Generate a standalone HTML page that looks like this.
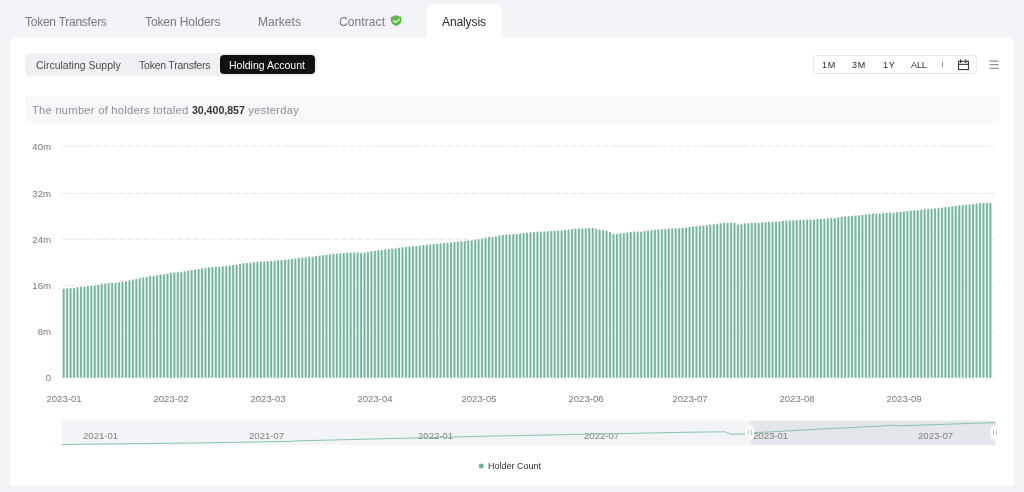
<!DOCTYPE html>
<html>
<head>
<meta charset="utf-8">
<style>
html,body{margin:0;padding:0;}
body{width:1024px;height:492px;overflow:hidden;background:#f2f4f8;-webkit-font-smoothing:antialiased;position:relative;font-family:"Liberation Sans",sans-serif;}
.a{position:absolute;white-space:nowrap;will-change:transform;}
.tab{font-size:12px;color:#74787f;line-height:12px;top:16px;letter-spacing:-0.1px;}
.card{position:absolute;left:9.5px;top:37px;width:1004.5px;height:448.8px;background:#fff;border-radius:8px 8px 4px 4px;}
.atab{position:absolute;left:427px;top:4px;width:75px;height:40px;background:#fff;border-radius:8px 8px 0 0;}
.seg{position:absolute;left:25px;top:52.7px;width:292px;height:23.5px;background:#eff0f3;border-radius:5px;}
.segon{position:absolute;left:220px;top:55px;width:95px;height:19px;background:#111;border-radius:4px;}
.st{font-size:10.5px;line-height:11px;top:60.2px;color:#4a4a4a;}
.tr{position:absolute;left:813px;top:55px;width:162px;height:17px;border:1px solid #e6e8eb;border-radius:3px;}
.tt{font-size:9px;line-height:10px;top:59.7px;color:#2a2a2a;letter-spacing:0.75px;}
.info{position:absolute;left:25px;top:96px;width:974.5px;height:26.7px;background:#f8f8fa;border-radius:3px;}
.it{font-size:11.2px;line-height:12px;top:104px;color:#8a8e96;letter-spacing:0.25px;}
.yl{font-size:9.6px;color:#76797f;line-height:10px;text-align:right;width:30px;left:21px;}
.xl{font-size:9.6px;color:#76797f;line-height:10px;top:393.5px;width:60px;text-align:center;}
.sl{font-size:9.6px;color:#808080;line-height:10px;top:431px;}
</style>
</head>
<body>
<div class="a" style="left:1018px;top:0;width:6px;height:492px;background:#f2f4f8;"></div>
<div class="card"></div>
<div class="atab"></div>

<div class="a tab" style="left:25px;letter-spacing:-0.25px;">Token Transfers</div>
<div class="a tab" style="left:145px;">Token Holders</div>
<div class="a tab" style="left:258.3px;letter-spacing:0.05px;">Markets</div>
<div class="a tab" style="left:339.3px;letter-spacing:0.1px;">Contract</div>
<svg class="a" style="left:390px;top:15px;" width="12" height="12" viewBox="0 0 12 12">
<path d="M6.2 0.1 C7.9 1.1 9.5 1.7 11.4 1.9 L11.4 5.6 C11.4 8.2 9.3 10.1 6.2 10.9 C3.1 10.1 0.9 8.2 0.9 5.6 L0.9 1.9 C2.9 1.7 4.5 1.1 6.2 0.1 Z" fill="#5cb744"/>
<path d="M3.4 5.7 L5.6 7.5 L9.4 4.2" fill="none" stroke="#e8fbe0" stroke-width="1.2" stroke-linecap="round" stroke-linejoin="round"/>
</svg>
<div class="a tab" style="left:442px;color:#2b2b2b;">Analysis</div>

<div class="seg"></div>
<div class="segon"></div>
<div class="a st" style="left:36px;">Circulating Supply</div>
<div class="a st" style="left:139px;letter-spacing:-0.23px;">Token Transfers</div>
<div class="a st" style="left:229px;color:#fff;">Holding Account</div>

<div class="tr"></div>
<div class="a tt" style="left:822px;">1M</div>
<div class="a tt" style="left:852px;">3M</div>
<div class="a tt" style="left:883px;">1Y</div>
<div class="a tt" style="left:911.3px;letter-spacing:-0.1px;">ALL</div>
<div class="a" style="left:941.8px;top:62.2px;width:1px;height:4.5px;background:#8f8f8f;"></div>
<svg class="a" style="left:950px;top:54px;" width="54" height="22" viewBox="950 54 54 22">
<rect x="958.6" y="61.3" width="9.8" height="8.3" fill="none" stroke="#2a2a2a" stroke-width="1"/>
<line x1="958.6" y1="64.3" x2="968.4" y2="64.3" stroke="#2a2a2a" stroke-width="1"/>
<line x1="960.6" y1="59.3" x2="960.6" y2="63" stroke="#2a2a2a" stroke-width="1"/>
<line x1="965.9" y1="59.3" x2="965.9" y2="63" stroke="#2a2a2a" stroke-width="1"/>
<g stroke="#7a7a7a" stroke-width="1">
<line x1="989.5" y1="61.1" x2="998.7" y2="61.1"/>
<line x1="989.5" y1="64.7" x2="998.7" y2="64.7"/>
<line x1="989.5" y1="68.3" x2="998.7" y2="68.3"/>
</g>
</svg>

<div class="info"></div>
<div class="a it" style="left:32px;">The number of holders totaled <b style="color:#353535;letter-spacing:0;font-size:10.6px;">30,400,857</b> yesterday</div>

<div class="a yl" style="top:142.3px;">40m</div>
<div class="a yl" style="top:188.9px;">32m</div>
<div class="a yl" style="top:234.75px;">24m</div>
<div class="a yl" style="top:280.9px;">16m</div>
<div class="a yl" style="top:327.3px;">8m</div>
<div class="a yl" style="top:373.4px;">0</div>

<svg class="a" style="left:0;top:0;" width="1024" height="492" viewBox="0 0 1024 492">
<g stroke="#e6e7e9" stroke-width="1" stroke-dasharray="6 2.2">
<line x1="62" y1="146.1" x2="996" y2="146.1"/>
<line x1="62" y1="193.4" x2="996" y2="193.4"/>
<line x1="62" y1="239.25" x2="996" y2="239.25"/>
<line x1="62" y1="285.6" x2="996" y2="285.6"/>
<line x1="62" y1="331.9" x2="996" y2="331.9"/>
</g>
<line x1="62" y1="378" x2="996" y2="378" stroke="#f0f1f3" stroke-width="1"/>
<g fill="#e2f5f1"><rect x="61.97" y="289.90" width="3.46" height="87.80"/>
<rect x="65.43" y="289.39" width="3.46" height="88.31"/>
<rect x="68.89" y="289.30" width="3.46" height="88.40"/>
<rect x="72.34" y="289.28" width="3.46" height="88.42"/>
<rect x="75.80" y="288.30" width="3.46" height="89.40"/>
<rect x="79.26" y="288.02" width="3.46" height="89.68"/>
<rect x="82.72" y="287.82" width="3.46" height="89.88"/>
<rect x="86.18" y="287.45" width="3.46" height="90.25"/>
<rect x="89.63" y="287.05" width="3.46" height="90.65"/>
<rect x="93.09" y="286.58" width="3.46" height="91.12"/>
<rect x="96.55" y="286.08" width="3.46" height="91.62"/>
<rect x="100.01" y="285.26" width="3.46" height="92.44"/>
<rect x="103.46" y="284.61" width="3.46" height="93.09"/>
<rect x="106.92" y="284.12" width="3.46" height="93.58"/>
<rect x="110.38" y="284.00" width="3.46" height="93.70"/>
<rect x="113.84" y="284.00" width="3.46" height="93.70"/>
<rect x="117.29" y="283.51" width="3.46" height="94.19"/>
<rect x="120.75" y="282.92" width="3.46" height="94.78"/>
<rect x="124.21" y="282.33" width="3.46" height="95.37"/>
<rect x="127.67" y="281.52" width="3.46" height="96.18"/>
<rect x="131.13" y="280.85" width="3.46" height="96.85"/>
<rect x="134.58" y="280.21" width="3.46" height="97.49"/>
<rect x="138.04" y="279.47" width="3.46" height="98.23"/>
<rect x="141.50" y="278.66" width="3.46" height="99.04"/>
<rect x="144.96" y="277.96" width="3.46" height="99.74"/>
<rect x="148.41" y="277.21" width="3.46" height="100.49"/>
<rect x="151.87" y="277.20" width="3.46" height="100.50"/>
<rect x="155.33" y="276.48" width="3.46" height="101.22"/>
<rect x="158.79" y="275.60" width="3.46" height="102.10"/>
<rect x="162.24" y="275.60" width="3.46" height="102.10"/>
<rect x="165.70" y="274.83" width="3.46" height="102.87"/>
<rect x="169.16" y="274.16" width="3.46" height="103.54"/>
<rect x="172.62" y="273.52" width="3.46" height="104.18"/>
<rect x="176.08" y="273.40" width="3.46" height="104.30"/>
<rect x="179.53" y="272.91" width="3.46" height="104.79"/>
<rect x="182.99" y="272.39" width="3.46" height="105.31"/>
<rect x="186.45" y="271.86" width="3.46" height="105.84"/>
<rect x="189.91" y="271.34" width="3.46" height="106.36"/>
<rect x="193.36" y="270.82" width="3.46" height="106.88"/>
<rect x="196.82" y="270.21" width="3.46" height="107.49"/>
<rect x="200.28" y="269.60" width="3.46" height="108.10"/>
<rect x="203.74" y="268.99" width="3.46" height="108.71"/>
<rect x="207.19" y="268.65" width="3.46" height="109.05"/>
<rect x="210.65" y="268.30" width="3.46" height="109.40"/>
<rect x="214.11" y="268.01" width="3.46" height="109.69"/>
<rect x="217.57" y="267.73" width="3.46" height="109.97"/>
<rect x="221.03" y="267.44" width="3.46" height="110.26"/>
<rect x="224.48" y="267.01" width="3.46" height="110.69"/>
<rect x="227.94" y="266.57" width="3.46" height="111.13"/>
<rect x="231.40" y="266.12" width="3.46" height="111.58"/>
<rect x="234.86" y="265.58" width="3.46" height="112.12"/>
<rect x="238.31" y="265.04" width="3.46" height="112.66"/>
<rect x="241.77" y="264.50" width="3.46" height="113.20"/>
<rect x="245.23" y="264.27" width="3.46" height="113.43"/>
<rect x="248.69" y="264.05" width="3.46" height="113.65"/>
<rect x="252.14" y="263.52" width="3.46" height="114.18"/>
<rect x="255.60" y="262.91" width="3.46" height="114.79"/>
<rect x="259.06" y="262.72" width="3.46" height="114.98"/>
<rect x="262.52" y="262.54" width="3.46" height="115.16"/>
<rect x="265.98" y="262.36" width="3.46" height="115.34"/>
<rect x="269.43" y="262.10" width="3.46" height="115.60"/>
<rect x="272.89" y="261.79" width="3.46" height="115.91"/>
<rect x="276.35" y="261.48" width="3.46" height="116.22"/>
<rect x="279.81" y="261.15" width="3.46" height="116.55"/>
<rect x="283.26" y="260.81" width="3.46" height="116.89"/>
<rect x="286.72" y="260.47" width="3.46" height="117.23"/>
<rect x="290.18" y="260.05" width="3.46" height="117.65"/>
<rect x="293.64" y="259.61" width="3.46" height="118.09"/>
<rect x="297.09" y="259.16" width="3.46" height="118.54"/>
<rect x="300.55" y="258.84" width="3.46" height="118.86"/>
<rect x="304.01" y="258.53" width="3.46" height="119.17"/>
<rect x="307.47" y="258.23" width="3.46" height="119.47"/>
<rect x="310.93" y="257.99" width="3.46" height="119.71"/>
<rect x="314.38" y="257.40" width="3.46" height="120.30"/>
<rect x="317.84" y="256.81" width="3.46" height="120.89"/>
<rect x="321.30" y="256.37" width="3.46" height="121.33"/>
<rect x="324.76" y="255.96" width="3.46" height="121.74"/>
<rect x="328.21" y="255.55" width="3.46" height="122.15"/>
<rect x="331.67" y="255.17" width="3.46" height="122.53"/>
<rect x="335.13" y="254.79" width="3.46" height="122.91"/>
<rect x="338.59" y="254.52" width="3.46" height="123.18"/>
<rect x="342.04" y="254.25" width="3.46" height="123.45"/>
<rect x="345.50" y="253.99" width="3.46" height="123.71"/>
<rect x="348.96" y="253.85" width="3.46" height="123.85"/>
<rect x="352.42" y="253.71" width="3.46" height="123.99"/>
<rect x="355.88" y="253.71" width="3.46" height="123.99"/>
<rect x="359.33" y="254.32" width="3.46" height="123.38"/>
<rect x="362.79" y="253.66" width="3.46" height="124.04"/>
<rect x="366.25" y="253.04" width="3.46" height="124.66"/>
<rect x="369.71" y="252.45" width="3.46" height="125.25"/>
<rect x="373.16" y="251.92" width="3.46" height="125.78"/>
<rect x="376.62" y="251.42" width="3.46" height="126.28"/>
<rect x="380.08" y="250.95" width="3.46" height="126.75"/>
<rect x="383.54" y="250.68" width="3.46" height="127.02"/>
<rect x="386.99" y="250.41" width="3.46" height="127.29"/>
<rect x="390.45" y="249.96" width="3.46" height="127.74"/>
<rect x="393.91" y="249.50" width="3.46" height="128.20"/>
<rect x="397.37" y="249.00" width="3.46" height="128.70"/>
<rect x="400.83" y="248.49" width="3.46" height="129.21"/>
<rect x="404.28" y="247.99" width="3.46" height="129.71"/>
<rect x="407.74" y="247.67" width="3.46" height="130.03"/>
<rect x="411.20" y="247.40" width="3.46" height="130.30"/>
<rect x="414.66" y="247.05" width="3.46" height="130.65"/>
<rect x="418.11" y="246.69" width="3.46" height="131.01"/>
<rect x="421.57" y="246.34" width="3.46" height="131.36"/>
<rect x="425.03" y="245.97" width="3.46" height="131.73"/>
<rect x="428.49" y="245.60" width="3.46" height="132.10"/>
<rect x="431.94" y="245.22" width="3.46" height="132.48"/>
<rect x="435.40" y="244.88" width="3.46" height="132.82"/>
<rect x="438.86" y="244.54" width="3.46" height="133.16"/>
<rect x="442.32" y="244.20" width="3.46" height="133.50"/>
<rect x="445.78" y="243.85" width="3.46" height="133.85"/>
<rect x="449.23" y="243.51" width="3.46" height="134.19"/>
<rect x="452.69" y="243.16" width="3.46" height="134.54"/>
<rect x="456.15" y="242.75" width="3.46" height="134.95"/>
<rect x="459.61" y="242.34" width="3.46" height="135.36"/>
<rect x="463.06" y="242.06" width="3.46" height="135.64"/>
<rect x="466.52" y="241.79" width="3.46" height="135.91"/>
<rect x="469.98" y="241.44" width="3.46" height="136.26"/>
<rect x="473.44" y="241.06" width="3.46" height="136.64"/>
<rect x="476.90" y="240.44" width="3.46" height="137.26"/>
<rect x="480.35" y="239.78" width="3.46" height="137.92"/>
<rect x="483.81" y="238.94" width="3.46" height="138.76"/>
<rect x="487.27" y="238.10" width="3.46" height="139.60"/>
<rect x="490.73" y="238.10" width="3.46" height="139.60"/>
<rect x="494.18" y="237.43" width="3.46" height="140.27"/>
<rect x="497.64" y="236.69" width="3.46" height="141.01"/>
<rect x="501.10" y="236.17" width="3.46" height="141.53"/>
<rect x="504.56" y="235.70" width="3.46" height="142.00"/>
<rect x="508.01" y="235.51" width="3.46" height="142.19"/>
<rect x="511.47" y="235.33" width="3.46" height="142.37"/>
<rect x="514.93" y="235.02" width="3.46" height="142.68"/>
<rect x="518.39" y="234.68" width="3.46" height="143.02"/>
<rect x="521.85" y="234.34" width="3.46" height="143.36"/>
<rect x="525.30" y="233.94" width="3.46" height="143.76"/>
<rect x="528.76" y="233.53" width="3.46" height="144.17"/>
<rect x="532.22" y="233.18" width="3.46" height="144.52"/>
<rect x="535.68" y="232.85" width="3.46" height="144.85"/>
<rect x="539.13" y="232.80" width="3.46" height="144.90"/>
<rect x="542.59" y="232.80" width="3.46" height="144.90"/>
<rect x="546.05" y="232.48" width="3.46" height="145.22"/>
<rect x="549.51" y="232.16" width="3.46" height="145.54"/>
<rect x="552.96" y="231.98" width="3.46" height="145.72"/>
<rect x="556.42" y="231.83" width="3.46" height="145.87"/>
<rect x="559.88" y="231.63" width="3.46" height="146.07"/>
<rect x="563.34" y="231.16" width="3.46" height="146.54"/>
<rect x="566.80" y="230.67" width="3.46" height="147.03"/>
<rect x="570.25" y="230.25" width="3.46" height="147.45"/>
<rect x="573.71" y="229.85" width="3.46" height="147.85"/>
<rect x="577.17" y="229.77" width="3.46" height="147.93"/>
<rect x="580.63" y="229.74" width="3.46" height="147.96"/>
<rect x="584.08" y="229.70" width="3.46" height="148.00"/>
<rect x="587.54" y="229.20" width="3.46" height="148.50"/>
<rect x="591.00" y="229.10" width="3.46" height="148.60"/>
<rect x="594.46" y="230.06" width="3.46" height="147.64"/>
<rect x="597.91" y="230.63" width="3.46" height="147.07"/>
<rect x="601.37" y="231.41" width="3.46" height="146.29"/>
<rect x="604.83" y="232.11" width="3.46" height="145.59"/>
<rect x="608.29" y="233.21" width="3.46" height="144.49"/>
<rect x="611.75" y="235.08" width="3.46" height="142.62"/>
<rect x="615.20" y="235.40" width="3.46" height="142.30"/>
<rect x="618.66" y="234.56" width="3.46" height="143.14"/>
<rect x="622.12" y="234.40" width="3.46" height="143.30"/>
<rect x="625.58" y="233.66" width="3.46" height="144.04"/>
<rect x="629.03" y="233.14" width="3.46" height="144.56"/>
<rect x="632.49" y="232.70" width="3.46" height="145.00"/>
<rect x="635.95" y="232.73" width="3.46" height="144.97"/>
<rect x="639.41" y="232.89" width="3.46" height="144.81"/>
<rect x="642.86" y="232.29" width="3.46" height="145.41"/>
<rect x="646.32" y="231.78" width="3.46" height="145.92"/>
<rect x="649.78" y="231.30" width="3.46" height="146.40"/>
<rect x="653.24" y="230.95" width="3.46" height="146.75"/>
<rect x="656.70" y="230.61" width="3.46" height="147.09"/>
<rect x="660.15" y="230.45" width="3.46" height="147.25"/>
<rect x="663.61" y="230.30" width="3.46" height="147.40"/>
<rect x="667.07" y="229.78" width="3.46" height="147.92"/>
<rect x="670.53" y="229.70" width="3.46" height="148.00"/>
<rect x="673.98" y="229.70" width="3.46" height="148.00"/>
<rect x="677.44" y="229.41" width="3.46" height="148.29"/>
<rect x="680.90" y="229.03" width="3.46" height="148.67"/>
<rect x="684.36" y="228.62" width="3.46" height="149.08"/>
<rect x="687.81" y="228.14" width="3.46" height="149.56"/>
<rect x="691.27" y="227.67" width="3.46" height="150.03"/>
<rect x="694.73" y="227.30" width="3.46" height="150.40"/>
<rect x="698.19" y="226.94" width="3.46" height="150.76"/>
<rect x="701.65" y="226.66" width="3.46" height="151.04"/>
<rect x="705.10" y="226.38" width="3.46" height="151.32"/>
<rect x="708.56" y="225.74" width="3.46" height="151.96"/>
<rect x="712.02" y="225.32" width="3.46" height="152.38"/>
<rect x="715.48" y="224.91" width="3.46" height="152.79"/>
<rect x="718.93" y="224.43" width="3.46" height="153.27"/>
<rect x="722.39" y="223.94" width="3.46" height="153.76"/>
<rect x="725.85" y="223.90" width="3.46" height="153.80"/>
<rect x="729.31" y="223.90" width="3.46" height="153.80"/>
<rect x="732.76" y="223.90" width="3.46" height="153.80"/>
<rect x="736.22" y="225.66" width="3.46" height="152.04"/>
<rect x="739.68" y="224.85" width="3.46" height="152.85"/>
<rect x="743.14" y="224.61" width="3.46" height="153.09"/>
<rect x="746.60" y="224.42" width="3.46" height="153.28"/>
<rect x="750.05" y="223.98" width="3.46" height="153.72"/>
<rect x="753.51" y="223.90" width="3.46" height="153.80"/>
<rect x="756.97" y="223.90" width="3.46" height="153.80"/>
<rect x="760.43" y="223.57" width="3.46" height="154.13"/>
<rect x="763.88" y="223.18" width="3.46" height="154.52"/>
<rect x="767.34" y="223.10" width="3.46" height="154.60"/>
<rect x="770.80" y="223.10" width="3.46" height="154.60"/>
<rect x="774.26" y="222.91" width="3.46" height="154.79"/>
<rect x="777.72" y="222.66" width="3.46" height="155.04"/>
<rect x="781.17" y="222.19" width="3.46" height="155.51"/>
<rect x="784.63" y="221.64" width="3.46" height="156.06"/>
<rect x="788.09" y="221.60" width="3.46" height="156.10"/>
<rect x="791.55" y="221.60" width="3.46" height="156.10"/>
<rect x="795.00" y="221.31" width="3.46" height="156.39"/>
<rect x="798.46" y="220.99" width="3.46" height="156.71"/>
<rect x="801.92" y="220.90" width="3.46" height="156.80"/>
<rect x="805.38" y="220.81" width="3.46" height="156.89"/>
<rect x="808.83" y="220.76" width="3.46" height="156.94"/>
<rect x="812.29" y="220.71" width="3.46" height="156.99"/>
<rect x="815.75" y="220.23" width="3.46" height="157.47"/>
<rect x="819.21" y="220.20" width="3.46" height="157.50"/>
<rect x="822.67" y="220.20" width="3.46" height="157.50"/>
<rect x="826.12" y="219.51" width="3.46" height="158.19"/>
<rect x="829.58" y="219.35" width="3.46" height="158.35"/>
<rect x="833.04" y="219.20" width="3.46" height="158.50"/>
<rect x="836.50" y="218.56" width="3.46" height="159.14"/>
<rect x="839.95" y="217.92" width="3.46" height="159.78"/>
<rect x="843.41" y="217.90" width="3.46" height="159.80"/>
<rect x="846.87" y="217.51" width="3.46" height="160.19"/>
<rect x="850.33" y="217.07" width="3.46" height="160.63"/>
<rect x="853.78" y="216.75" width="3.46" height="160.95"/>
<rect x="857.24" y="216.45" width="3.46" height="161.25"/>
<rect x="860.70" y="216.09" width="3.46" height="161.61"/>
<rect x="864.16" y="215.70" width="3.46" height="162.00"/>
<rect x="867.62" y="215.26" width="3.46" height="162.44"/>
<rect x="871.07" y="214.81" width="3.46" height="162.89"/>
<rect x="874.53" y="214.80" width="3.46" height="162.90"/>
<rect x="877.99" y="214.80" width="3.46" height="162.90"/>
<rect x="881.45" y="214.38" width="3.46" height="163.32"/>
<rect x="884.90" y="213.93" width="3.46" height="163.77"/>
<rect x="888.36" y="213.90" width="3.46" height="163.80"/>
<rect x="891.82" y="213.90" width="3.46" height="163.80"/>
<rect x="895.28" y="213.41" width="3.46" height="164.29"/>
<rect x="898.73" y="212.95" width="3.46" height="164.75"/>
<rect x="902.19" y="212.61" width="3.46" height="165.09"/>
<rect x="905.65" y="212.21" width="3.46" height="165.49"/>
<rect x="909.11" y="211.82" width="3.46" height="165.88"/>
<rect x="912.57" y="211.56" width="3.46" height="166.14"/>
<rect x="916.02" y="211.32" width="3.46" height="166.38"/>
<rect x="919.48" y="210.84" width="3.46" height="166.86"/>
<rect x="922.94" y="210.35" width="3.46" height="167.35"/>
<rect x="926.40" y="210.30" width="3.46" height="167.40"/>
<rect x="929.85" y="209.99" width="3.46" height="167.71"/>
<rect x="933.31" y="209.63" width="3.46" height="168.07"/>
<rect x="936.77" y="209.21" width="3.46" height="168.49"/>
<rect x="940.23" y="208.78" width="3.46" height="168.92"/>
<rect x="943.68" y="208.45" width="3.46" height="169.25"/>
<rect x="947.14" y="208.11" width="3.46" height="169.59"/>
<rect x="950.60" y="207.29" width="3.46" height="170.41"/>
<rect x="954.06" y="206.92" width="3.46" height="170.78"/>
<rect x="957.52" y="206.61" width="3.46" height="171.09"/>
<rect x="960.97" y="206.32" width="3.46" height="171.38"/>
<rect x="964.43" y="206.04" width="3.46" height="171.66"/>
<rect x="967.89" y="205.67" width="3.46" height="172.03"/>
<rect x="971.35" y="205.29" width="3.46" height="172.41"/>
<rect x="974.80" y="204.80" width="3.46" height="172.90"/>
<rect x="978.26" y="204.28" width="3.46" height="173.42"/>
<rect x="981.72" y="204.11" width="3.46" height="173.59"/>
<rect x="985.18" y="204.01" width="3.46" height="173.69"/>
<rect x="988.63" y="204.00" width="3.46" height="173.70"/></g>
<g fill="#79b39d"><rect x="62.78" y="288.70" width="1.85" height="89.00"/>
<rect x="66.23" y="288.19" width="1.85" height="89.51"/>
<rect x="69.69" y="288.10" width="1.85" height="89.60"/>
<rect x="73.15" y="288.08" width="1.85" height="89.62"/>
<rect x="76.61" y="287.10" width="1.85" height="90.60"/>
<rect x="80.06" y="286.82" width="1.85" height="90.88"/>
<rect x="83.52" y="286.62" width="1.85" height="91.08"/>
<rect x="86.98" y="286.25" width="1.85" height="91.45"/>
<rect x="90.44" y="285.85" width="1.85" height="91.85"/>
<rect x="93.89" y="285.38" width="1.85" height="92.32"/>
<rect x="97.35" y="284.88" width="1.85" height="92.82"/>
<rect x="100.81" y="284.06" width="1.85" height="93.64"/>
<rect x="104.27" y="283.41" width="1.85" height="94.29"/>
<rect x="107.73" y="282.92" width="1.85" height="94.78"/>
<rect x="111.18" y="282.80" width="1.85" height="94.90"/>
<rect x="114.64" y="282.80" width="1.85" height="94.90"/>
<rect x="118.10" y="282.31" width="1.85" height="95.39"/>
<rect x="121.56" y="281.72" width="1.85" height="95.98"/>
<rect x="125.01" y="281.13" width="1.85" height="96.57"/>
<rect x="128.47" y="280.32" width="1.85" height="97.38"/>
<rect x="131.93" y="279.65" width="1.85" height="98.05"/>
<rect x="135.39" y="279.01" width="1.85" height="98.69"/>
<rect x="138.84" y="278.27" width="1.85" height="99.43"/>
<rect x="142.30" y="277.46" width="1.85" height="100.24"/>
<rect x="145.76" y="276.76" width="1.85" height="100.94"/>
<rect x="149.22" y="276.01" width="1.85" height="101.69"/>
<rect x="152.68" y="276.00" width="1.85" height="101.70"/>
<rect x="156.13" y="275.28" width="1.85" height="102.42"/>
<rect x="159.59" y="274.40" width="1.85" height="103.30"/>
<rect x="163.05" y="274.40" width="1.85" height="103.30"/>
<rect x="166.51" y="273.63" width="1.85" height="104.07"/>
<rect x="169.96" y="272.96" width="1.85" height="104.74"/>
<rect x="173.42" y="272.32" width="1.85" height="105.38"/>
<rect x="176.88" y="272.20" width="1.85" height="105.50"/>
<rect x="180.34" y="271.71" width="1.85" height="105.99"/>
<rect x="183.79" y="271.19" width="1.85" height="106.51"/>
<rect x="187.25" y="270.66" width="1.85" height="107.04"/>
<rect x="190.71" y="270.14" width="1.85" height="107.56"/>
<rect x="194.17" y="269.62" width="1.85" height="108.08"/>
<rect x="197.63" y="269.01" width="1.85" height="108.69"/>
<rect x="201.08" y="268.40" width="1.85" height="109.30"/>
<rect x="204.54" y="267.79" width="1.85" height="109.91"/>
<rect x="208.00" y="267.45" width="1.85" height="110.25"/>
<rect x="211.46" y="267.10" width="1.85" height="110.60"/>
<rect x="214.91" y="266.81" width="1.85" height="110.89"/>
<rect x="218.37" y="266.53" width="1.85" height="111.17"/>
<rect x="221.83" y="266.24" width="1.85" height="111.46"/>
<rect x="225.29" y="265.81" width="1.85" height="111.89"/>
<rect x="228.74" y="265.37" width="1.85" height="112.33"/>
<rect x="232.20" y="264.92" width="1.85" height="112.78"/>
<rect x="235.66" y="264.38" width="1.85" height="113.32"/>
<rect x="239.12" y="263.84" width="1.85" height="113.86"/>
<rect x="242.58" y="263.30" width="1.85" height="114.40"/>
<rect x="246.03" y="263.07" width="1.85" height="114.63"/>
<rect x="249.49" y="262.85" width="1.85" height="114.85"/>
<rect x="252.95" y="262.32" width="1.85" height="115.38"/>
<rect x="256.41" y="261.71" width="1.85" height="115.99"/>
<rect x="259.86" y="261.52" width="1.85" height="116.18"/>
<rect x="263.32" y="261.34" width="1.85" height="116.36"/>
<rect x="266.78" y="261.16" width="1.85" height="116.54"/>
<rect x="270.24" y="260.90" width="1.85" height="116.80"/>
<rect x="273.69" y="260.59" width="1.85" height="117.11"/>
<rect x="277.15" y="260.28" width="1.85" height="117.42"/>
<rect x="280.61" y="259.95" width="1.85" height="117.75"/>
<rect x="284.07" y="259.61" width="1.85" height="118.09"/>
<rect x="287.53" y="259.27" width="1.85" height="118.43"/>
<rect x="290.98" y="258.85" width="1.85" height="118.85"/>
<rect x="294.44" y="258.41" width="1.85" height="119.29"/>
<rect x="297.90" y="257.96" width="1.85" height="119.74"/>
<rect x="301.36" y="257.64" width="1.85" height="120.06"/>
<rect x="304.81" y="257.33" width="1.85" height="120.37"/>
<rect x="308.27" y="257.03" width="1.85" height="120.67"/>
<rect x="311.73" y="256.79" width="1.85" height="120.91"/>
<rect x="315.19" y="256.20" width="1.85" height="121.50"/>
<rect x="318.64" y="255.61" width="1.85" height="122.09"/>
<rect x="322.10" y="255.17" width="1.85" height="122.53"/>
<rect x="325.56" y="254.76" width="1.85" height="122.94"/>
<rect x="329.02" y="254.35" width="1.85" height="123.35"/>
<rect x="332.48" y="253.97" width="1.85" height="123.73"/>
<rect x="335.93" y="253.59" width="1.85" height="124.11"/>
<rect x="339.39" y="253.32" width="1.85" height="124.38"/>
<rect x="342.85" y="253.05" width="1.85" height="124.65"/>
<rect x="346.31" y="252.79" width="1.85" height="124.91"/>
<rect x="349.76" y="252.65" width="1.85" height="125.05"/>
<rect x="353.22" y="252.51" width="1.85" height="125.19"/>
<rect x="356.68" y="252.51" width="1.85" height="125.19"/>
<rect x="360.14" y="253.12" width="1.85" height="124.58"/>
<rect x="363.59" y="252.46" width="1.85" height="125.24"/>
<rect x="367.05" y="251.84" width="1.85" height="125.86"/>
<rect x="370.51" y="251.25" width="1.85" height="126.45"/>
<rect x="373.97" y="250.72" width="1.85" height="126.98"/>
<rect x="377.43" y="250.22" width="1.85" height="127.48"/>
<rect x="380.88" y="249.75" width="1.85" height="127.95"/>
<rect x="384.34" y="249.48" width="1.85" height="128.22"/>
<rect x="387.80" y="249.21" width="1.85" height="128.49"/>
<rect x="391.26" y="248.76" width="1.85" height="128.94"/>
<rect x="394.71" y="248.30" width="1.85" height="129.40"/>
<rect x="398.17" y="247.80" width="1.85" height="129.90"/>
<rect x="401.63" y="247.29" width="1.85" height="130.41"/>
<rect x="405.09" y="246.79" width="1.85" height="130.91"/>
<rect x="408.54" y="246.47" width="1.85" height="131.23"/>
<rect x="412.00" y="246.20" width="1.85" height="131.50"/>
<rect x="415.46" y="245.85" width="1.85" height="131.85"/>
<rect x="418.92" y="245.49" width="1.85" height="132.21"/>
<rect x="422.38" y="245.14" width="1.85" height="132.56"/>
<rect x="425.83" y="244.77" width="1.85" height="132.93"/>
<rect x="429.29" y="244.40" width="1.85" height="133.30"/>
<rect x="432.75" y="244.02" width="1.85" height="133.68"/>
<rect x="436.21" y="243.68" width="1.85" height="134.02"/>
<rect x="439.66" y="243.34" width="1.85" height="134.36"/>
<rect x="443.12" y="243.00" width="1.85" height="134.70"/>
<rect x="446.58" y="242.65" width="1.85" height="135.05"/>
<rect x="450.04" y="242.31" width="1.85" height="135.39"/>
<rect x="453.50" y="241.96" width="1.85" height="135.74"/>
<rect x="456.95" y="241.55" width="1.85" height="136.15"/>
<rect x="460.41" y="241.14" width="1.85" height="136.56"/>
<rect x="463.87" y="240.86" width="1.85" height="136.84"/>
<rect x="467.33" y="240.59" width="1.85" height="137.11"/>
<rect x="470.78" y="240.24" width="1.85" height="137.46"/>
<rect x="474.24" y="239.86" width="1.85" height="137.84"/>
<rect x="477.70" y="239.24" width="1.85" height="138.46"/>
<rect x="481.16" y="238.58" width="1.85" height="139.12"/>
<rect x="484.61" y="237.74" width="1.85" height="139.96"/>
<rect x="488.07" y="236.90" width="1.85" height="140.80"/>
<rect x="491.53" y="236.90" width="1.85" height="140.80"/>
<rect x="494.99" y="236.23" width="1.85" height="141.47"/>
<rect x="498.45" y="235.49" width="1.85" height="142.21"/>
<rect x="501.90" y="234.97" width="1.85" height="142.73"/>
<rect x="505.36" y="234.50" width="1.85" height="143.20"/>
<rect x="508.82" y="234.31" width="1.85" height="143.39"/>
<rect x="512.28" y="234.13" width="1.85" height="143.57"/>
<rect x="515.73" y="233.82" width="1.85" height="143.88"/>
<rect x="519.19" y="233.48" width="1.85" height="144.22"/>
<rect x="522.65" y="233.14" width="1.85" height="144.56"/>
<rect x="526.11" y="232.74" width="1.85" height="144.96"/>
<rect x="529.56" y="232.33" width="1.85" height="145.37"/>
<rect x="533.02" y="231.98" width="1.85" height="145.72"/>
<rect x="536.48" y="231.65" width="1.85" height="146.05"/>
<rect x="539.94" y="231.60" width="1.85" height="146.10"/>
<rect x="543.40" y="231.60" width="1.85" height="146.10"/>
<rect x="546.85" y="231.28" width="1.85" height="146.42"/>
<rect x="550.31" y="230.96" width="1.85" height="146.74"/>
<rect x="553.77" y="230.78" width="1.85" height="146.92"/>
<rect x="557.23" y="230.63" width="1.85" height="147.07"/>
<rect x="560.68" y="230.43" width="1.85" height="147.27"/>
<rect x="564.14" y="229.96" width="1.85" height="147.74"/>
<rect x="567.60" y="229.47" width="1.85" height="148.23"/>
<rect x="571.06" y="229.05" width="1.85" height="148.65"/>
<rect x="574.51" y="228.65" width="1.85" height="149.05"/>
<rect x="577.97" y="228.57" width="1.85" height="149.13"/>
<rect x="581.43" y="228.54" width="1.85" height="149.16"/>
<rect x="584.89" y="228.50" width="1.85" height="149.20"/>
<rect x="588.35" y="228.00" width="1.85" height="149.70"/>
<rect x="591.80" y="227.90" width="1.85" height="149.80"/>
<rect x="595.26" y="228.86" width="1.85" height="148.84"/>
<rect x="598.72" y="229.43" width="1.85" height="148.27"/>
<rect x="602.18" y="230.21" width="1.85" height="147.49"/>
<rect x="605.63" y="230.91" width="1.85" height="146.79"/>
<rect x="609.09" y="232.01" width="1.85" height="145.69"/>
<rect x="612.55" y="233.88" width="1.85" height="143.82"/>
<rect x="616.01" y="234.20" width="1.85" height="143.50"/>
<rect x="619.46" y="233.36" width="1.85" height="144.34"/>
<rect x="622.92" y="233.20" width="1.85" height="144.50"/>
<rect x="626.38" y="232.46" width="1.85" height="145.24"/>
<rect x="629.84" y="231.94" width="1.85" height="145.76"/>
<rect x="633.30" y="231.50" width="1.85" height="146.20"/>
<rect x="636.75" y="231.53" width="1.85" height="146.17"/>
<rect x="640.21" y="231.69" width="1.85" height="146.01"/>
<rect x="643.67" y="231.09" width="1.85" height="146.61"/>
<rect x="647.13" y="230.58" width="1.85" height="147.12"/>
<rect x="650.58" y="230.10" width="1.85" height="147.60"/>
<rect x="654.04" y="229.75" width="1.85" height="147.95"/>
<rect x="657.50" y="229.41" width="1.85" height="148.29"/>
<rect x="660.96" y="229.25" width="1.85" height="148.45"/>
<rect x="664.41" y="229.10" width="1.85" height="148.60"/>
<rect x="667.87" y="228.58" width="1.85" height="149.12"/>
<rect x="671.33" y="228.50" width="1.85" height="149.20"/>
<rect x="674.79" y="228.50" width="1.85" height="149.20"/>
<rect x="678.25" y="228.21" width="1.85" height="149.49"/>
<rect x="681.70" y="227.83" width="1.85" height="149.87"/>
<rect x="685.16" y="227.42" width="1.85" height="150.28"/>
<rect x="688.62" y="226.94" width="1.85" height="150.76"/>
<rect x="692.08" y="226.47" width="1.85" height="151.23"/>
<rect x="695.53" y="226.10" width="1.85" height="151.60"/>
<rect x="698.99" y="225.74" width="1.85" height="151.96"/>
<rect x="702.45" y="225.46" width="1.85" height="152.24"/>
<rect x="705.91" y="225.18" width="1.85" height="152.52"/>
<rect x="709.36" y="224.54" width="1.85" height="153.16"/>
<rect x="712.82" y="224.12" width="1.85" height="153.58"/>
<rect x="716.28" y="223.71" width="1.85" height="153.99"/>
<rect x="719.74" y="223.23" width="1.85" height="154.47"/>
<rect x="723.20" y="222.74" width="1.85" height="154.96"/>
<rect x="726.65" y="222.70" width="1.85" height="155.00"/>
<rect x="730.11" y="222.70" width="1.85" height="155.00"/>
<rect x="733.57" y="222.70" width="1.85" height="155.00"/>
<rect x="737.03" y="224.46" width="1.85" height="153.24"/>
<rect x="740.48" y="223.65" width="1.85" height="154.05"/>
<rect x="743.94" y="223.41" width="1.85" height="154.29"/>
<rect x="747.40" y="223.22" width="1.85" height="154.48"/>
<rect x="750.86" y="222.78" width="1.85" height="154.92"/>
<rect x="754.32" y="222.70" width="1.85" height="155.00"/>
<rect x="757.77" y="222.70" width="1.85" height="155.00"/>
<rect x="761.23" y="222.37" width="1.85" height="155.33"/>
<rect x="764.69" y="221.98" width="1.85" height="155.72"/>
<rect x="768.15" y="221.90" width="1.85" height="155.80"/>
<rect x="771.60" y="221.90" width="1.85" height="155.80"/>
<rect x="775.06" y="221.71" width="1.85" height="155.99"/>
<rect x="778.52" y="221.46" width="1.85" height="156.24"/>
<rect x="781.98" y="220.99" width="1.85" height="156.71"/>
<rect x="785.43" y="220.44" width="1.85" height="157.26"/>
<rect x="788.89" y="220.40" width="1.85" height="157.30"/>
<rect x="792.35" y="220.40" width="1.85" height="157.30"/>
<rect x="795.81" y="220.11" width="1.85" height="157.59"/>
<rect x="799.27" y="219.79" width="1.85" height="157.91"/>
<rect x="802.72" y="219.70" width="1.85" height="158.00"/>
<rect x="806.18" y="219.61" width="1.85" height="158.09"/>
<rect x="809.64" y="219.56" width="1.85" height="158.14"/>
<rect x="813.10" y="219.51" width="1.85" height="158.19"/>
<rect x="816.55" y="219.03" width="1.85" height="158.67"/>
<rect x="820.01" y="219.00" width="1.85" height="158.70"/>
<rect x="823.47" y="219.00" width="1.85" height="158.70"/>
<rect x="826.93" y="218.31" width="1.85" height="159.39"/>
<rect x="830.38" y="218.15" width="1.85" height="159.55"/>
<rect x="833.84" y="218.00" width="1.85" height="159.70"/>
<rect x="837.30" y="217.36" width="1.85" height="160.34"/>
<rect x="840.76" y="216.72" width="1.85" height="160.98"/>
<rect x="844.22" y="216.70" width="1.85" height="161.00"/>
<rect x="847.67" y="216.31" width="1.85" height="161.39"/>
<rect x="851.13" y="215.87" width="1.85" height="161.83"/>
<rect x="854.59" y="215.55" width="1.85" height="162.15"/>
<rect x="858.05" y="215.25" width="1.85" height="162.45"/>
<rect x="861.50" y="214.89" width="1.85" height="162.81"/>
<rect x="864.96" y="214.50" width="1.85" height="163.20"/>
<rect x="868.42" y="214.06" width="1.85" height="163.64"/>
<rect x="871.88" y="213.61" width="1.85" height="164.09"/>
<rect x="875.33" y="213.60" width="1.85" height="164.10"/>
<rect x="878.79" y="213.60" width="1.85" height="164.10"/>
<rect x="882.25" y="213.18" width="1.85" height="164.52"/>
<rect x="885.71" y="212.73" width="1.85" height="164.97"/>
<rect x="889.17" y="212.70" width="1.85" height="165.00"/>
<rect x="892.62" y="212.70" width="1.85" height="165.00"/>
<rect x="896.08" y="212.21" width="1.85" height="165.49"/>
<rect x="899.54" y="211.75" width="1.85" height="165.95"/>
<rect x="903.00" y="211.41" width="1.85" height="166.29"/>
<rect x="906.45" y="211.01" width="1.85" height="166.69"/>
<rect x="909.91" y="210.62" width="1.85" height="167.08"/>
<rect x="913.37" y="210.36" width="1.85" height="167.34"/>
<rect x="916.83" y="210.12" width="1.85" height="167.58"/>
<rect x="920.28" y="209.64" width="1.85" height="168.06"/>
<rect x="923.74" y="209.15" width="1.85" height="168.55"/>
<rect x="927.20" y="209.10" width="1.85" height="168.60"/>
<rect x="930.66" y="208.79" width="1.85" height="168.91"/>
<rect x="934.12" y="208.43" width="1.85" height="169.27"/>
<rect x="937.57" y="208.01" width="1.85" height="169.69"/>
<rect x="941.03" y="207.58" width="1.85" height="170.12"/>
<rect x="944.49" y="207.25" width="1.85" height="170.45"/>
<rect x="947.95" y="206.91" width="1.85" height="170.79"/>
<rect x="951.40" y="206.09" width="1.85" height="171.61"/>
<rect x="954.86" y="205.72" width="1.85" height="171.98"/>
<rect x="958.32" y="205.41" width="1.85" height="172.29"/>
<rect x="961.78" y="205.12" width="1.85" height="172.58"/>
<rect x="965.23" y="204.84" width="1.85" height="172.86"/>
<rect x="968.69" y="204.47" width="1.85" height="173.23"/>
<rect x="972.15" y="204.09" width="1.85" height="173.61"/>
<rect x="975.61" y="203.60" width="1.85" height="174.10"/>
<rect x="979.07" y="203.08" width="1.85" height="174.62"/>
<rect x="982.52" y="202.91" width="1.85" height="174.79"/>
<rect x="985.98" y="202.81" width="1.85" height="174.89"/>
<rect x="989.44" y="202.80" width="1.85" height="174.90"/></g>
<rect x="62" y="420.6" width="688.5" height="24.3" fill="#f2f4f7"/>
<rect x="750.5" y="420.6" width="245" height="24.3" fill="#e3e6ea"/>
</svg>

<div class="a xl" style="left:33.7px;">2023-01</div>
<div class="a xl" style="left:140.8px;">2023-02</div>
<div class="a xl" style="left:237.6px;">2023-03</div>
<div class="a xl" style="left:344.9px;">2023-04</div>
<div class="a xl" style="left:448.5px;">2023-05</div>
<div class="a xl" style="left:556px;">2023-06</div>
<div class="a xl" style="left:659.7px;">2023-07</div>
<div class="a xl" style="left:766.8px;">2023-08</div>
<div class="a xl" style="left:874.1px;">2023-09</div>

<div class="a sl" style="left:83px;">2021-01</div>
<div class="a sl" style="left:249px;">2021-07</div>
<div class="a sl" style="left:417.5px;">2022-01</div>
<div class="a sl" style="left:583.5px;">2022-07</div>
<div class="a sl" style="left:752.5px;">2023-01</div>
<div class="a sl" style="left:918px;">2023-07</div>

<svg class="a" style="left:0;top:0;" width="1024" height="492" viewBox="0 0 1024 492">
<polyline points="62,444.5 200,442.9 290,441.4 300,440.8 490,436.1 690,432.2 725,431.8 731,434.3 745,434 755,432.6 760,432.4 820,429.1 850,427.6 880,426.1 890,425.2 900,425.8 995.5,422.6" fill="none" stroke="#88c3ae" stroke-width="1"/>
<g>
<rect x="745.2" y="425.1" width="8.9" height="14.8" rx="4.4" fill="#fff" stroke="#e9eaec" stroke-width="0.5"/>
<line x1="748.3" y1="429.7" x2="748.3" y2="435.1" stroke="#b5b5b5" stroke-width="0.9"/>
<line x1="751.3" y1="429.7" x2="751.3" y2="435.1" stroke="#b5b5b5" stroke-width="0.9"/>
<rect x="990.6" y="425.5" width="7.5" height="14.4" rx="3.7" fill="#fff" stroke="#e9eaec" stroke-width="0.5"/>
<line x1="993.5" y1="429.7" x2="993.5" y2="435.1" stroke="#b5b5b5" stroke-width="0.9"/>
<line x1="996.3" y1="429.7" x2="996.3" y2="435.1" stroke="#b5b5b5" stroke-width="0.9"/>
</g>
<circle cx="481.2" cy="466.1" r="2.5" fill="#6cb896"/>
</svg>
<div class="a" style="left:487.5px;top:462.4px;font-size:9px;line-height:9px;color:#333;">Holder Count</div>
</body>
</html>
